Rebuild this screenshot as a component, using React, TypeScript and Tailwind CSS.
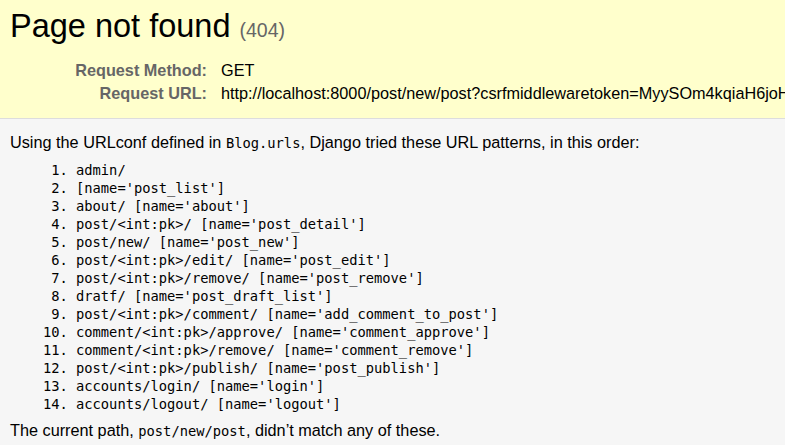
import React from 'react';

const patterns: string[] = [
  "admin/",
  "[name='post_list']",
  "about/ [name='about']",
  "post/<int:pk>/ [name='post_detail']",
  "post/new/ [name='post_new']",
  "post/<int:pk>/edit/ [name='post_edit']",
  "post/<int:pk>/remove/ [name='post_remove']",
  "dratf/ [name='post_draft_list']",
  "post/<int:pk>/comment/ [name='add_comment_to_post']",
  "comment/<int:pk>/approve/ [name='comment_approve']",
  "comment/<int:pk>/remove/ [name='comment_remove']",
  "post/<int:pk>/publish/ [name='post_publish']",
  "accounts/login/ [name='login']",
  "accounts/logout/ [name='logout']",
];

const mono = "font-['DejaVu_Sans_Mono',Consolas,monospace] text-[13.75px]";

const Row: React.FC<{ label: string; value: string }> = ({ label, value }) => (
  <div className="flex py-[2px]">
    <div className="w-[205px] shrink-0 pr-[8px] text-right font-bold text-[#666666] whitespace-nowrap">{label}</div>
    <div className="pl-[6px] whitespace-nowrap">{value}</div>
  </div>
);

const App: React.FC = () => {
  return (
    <div className="w-full h-screen overflow-hidden bg-[#f6f6f6] text-black font-['Liberation_Sans',Arial,sans-serif] text-[16.25px] leading-[19px]">
      {/* summary */}
      <div className="bg-[#ffffcc] border-b border-[#dddddd] pl-[10px] pt-[7px] pb-[13px] overflow-hidden">
        <h1 className="text-[32.5px] leading-[38px] font-normal mb-[9.5px] whitespace-nowrap">
          Page not found <span className="text-[19.5px] text-[#666666]">(404)</span>
        </h1>
        <Row label="Request Method:" value="GET" />
        <Row label="Request URL:" value="http://localhost:8000/post/new/post?csrfmiddlewaretoken=MyySOm4kqiaH6joH" />
      </div>

      {/* info */}
      <div className="pl-[10px] pt-[14px]">
        <p className="whitespace-nowrap">
          Using the URLconf defined in <code className={mono}>Blog.urls</code>, Django tried these URL patterns, in this order:
        </p>
        <ol className={`list-decimal ml-[66px] my-[8px] ${mono} leading-[18px]`}>
          {patterns.map((p) => (
            <li key={p} className="whitespace-pre">{p}</li>
          ))}
        </ol>
        <p className="whitespace-nowrap">
          The current path, <code className={mono}>post/new/post</code>, didn’t match any of these.
        </p>
      </div>
    </div>
  );
};

export default App;
